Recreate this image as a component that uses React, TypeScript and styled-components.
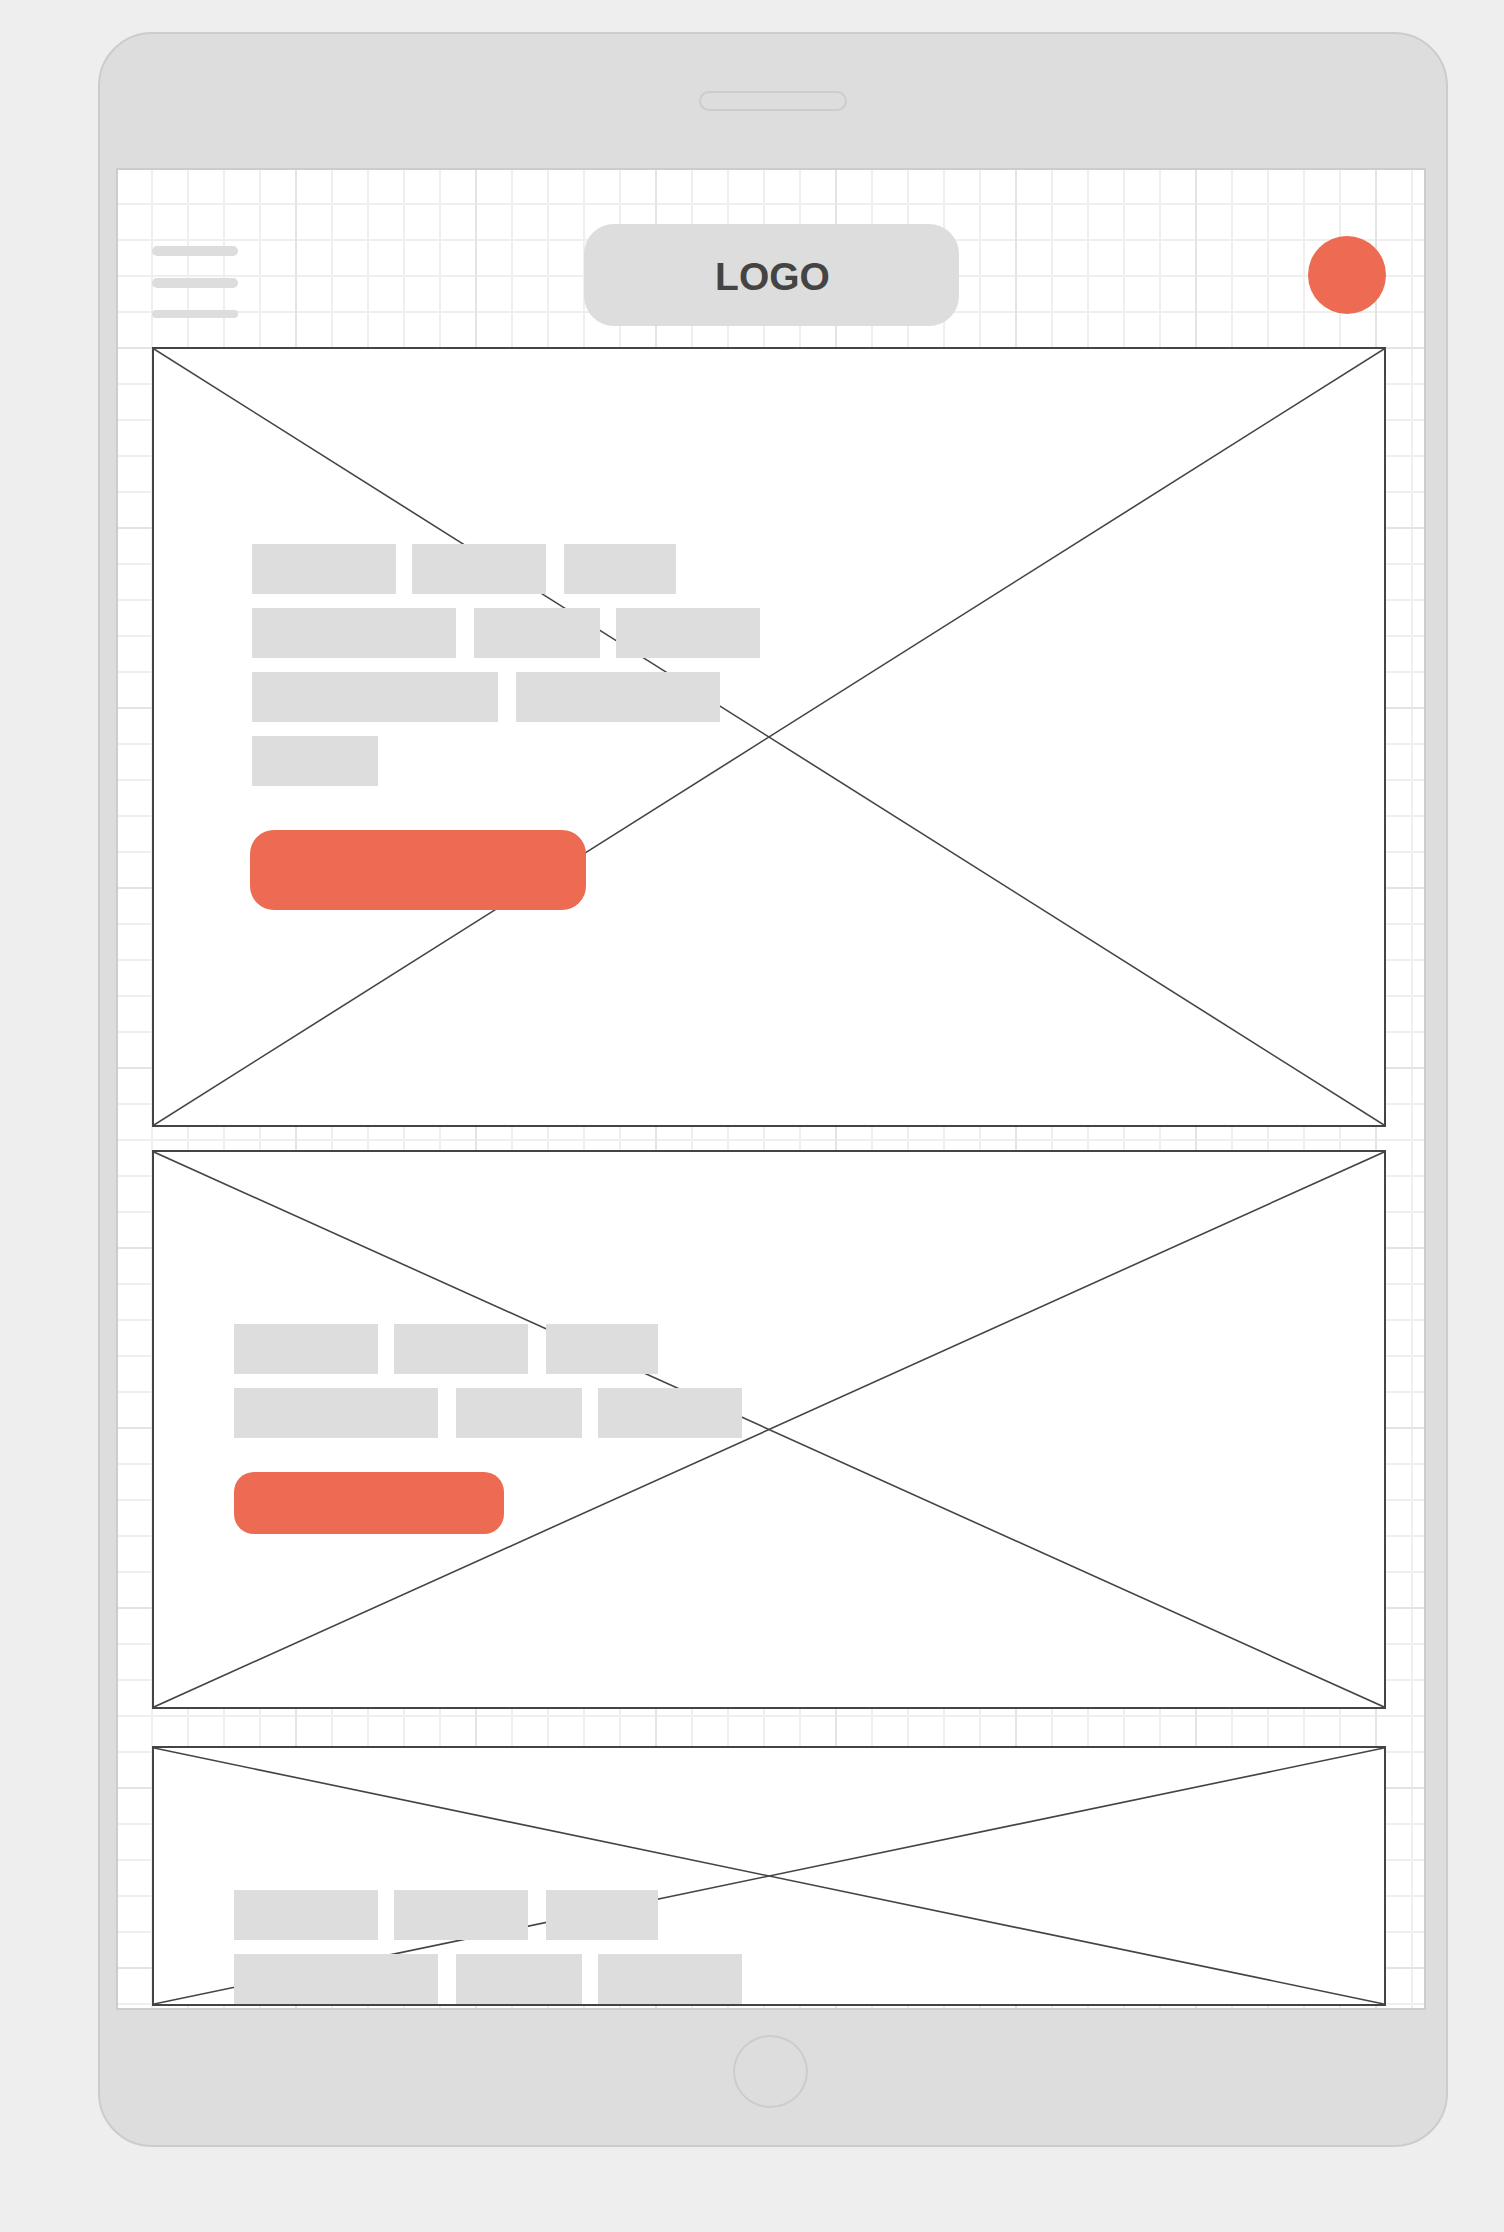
import React from "react";
import styled, { createGlobalStyle } from "styled-components";

const GlobalStyle = createGlobalStyle`
  html, body {
    margin: 0;
    padding: 0;
    background: #eeeeee;
    font-family: "Liberation Sans", Arial, sans-serif;
  }
  * { box-sizing: border-box; }
`;

const Page = styled.div`
  padding: 32px 0 0 98px;
  min-height: 2232px;
`;

const Device = styled.div`
  width: 1350px;
  height: 2115px;
  background: #dddddd;
  border: 2px solid #cccccc;
  border-radius: 54px;
  display: flex;
  flex-direction: column;
  padding: 0 20px 0 16px;
`;

const Bezel = styled.div<{ $h: number; $pt: number }>`
  height: ${(p) => p.$h}px;
  padding-top: ${(p) => p.$pt}px;
  display: flex;
  justify-content: center;
  align-items: flex-start;
  flex: none;
`;

const Speaker = styled.div`
  width: 148px;
  height: 20px;
  border: 2px solid #cccccc;
  border-radius: 10px;
  margin-left: 4px;
`;

const HomeButton = styled.div`
  width: 75px;
  height: 73px;
  border: 2px solid #cccccc;
  border-radius: 50%;
  margin-right: 2px;
`;

const Screen = styled.div`
  width: 1310px;
  height: 1842px;
  flex: none;
  border: 2px solid #cccccc;
  overflow: hidden;
  background-color: #ffffff;
  background-image:
    linear-gradient(to right, #e4e4e4 2px, transparent 2px),
    linear-gradient(to bottom, #e4e4e4 2px, transparent 2px),
    linear-gradient(to right, #efefef 2px, transparent 2px),
    linear-gradient(to bottom, #efefef 2px, transparent 2px);
  background-size: 180px 180px, 180px 180px, 36px 36px, 36px 36px;
  background-position: -3px -3px;
  padding: 0 38px 0 34px;
  display: flex;
  flex-direction: column;
`;

const Header = styled.header`
  display: grid;
  grid-template-columns: 1fr auto 1fr;
  align-items: center;
  padding: 54px 0 21px;
  flex: none;
`;

const Hamburger = styled.div`
  justify-self: start;
  display: flex;
  flex-direction: column;
  gap: 22px;
  margin-top: 14px;
`;

const HamburgerBar = styled.span<{ $h: number }>`
  display: block;
  width: 86px;
  height: ${(p) => p.$h}px;
  background: #dddddd;
  border-radius: 5px;
`;

const Logo = styled.div`
  width: 375px;
  height: 102px;
  margin-left: 5px;
  background: #dddddd;
  border-radius: 30px;
  display: flex;
  align-items: center;
  justify-content: center;
  font-family: "Liberation Sans", Arial, sans-serif;
  font-weight: 700;
  font-size: 39px;
  color: #444444;
  padding: 3px 0 0 2px;
`;

const Avatar = styled.div`
  justify-self: end;
  width: 78px;
  height: 78px;
  border-radius: 50%;
  background: #ec6b52;
`;

const Section = styled.section<{
  $h: number;
  $pt: number;
  $pl: number;
  $mt: number;
}>`
  position: relative;
  flex: none;
  height: ${(p) => p.$h}px;
  margin-top: ${(p) => p.$mt}px;
  border: 2px solid #444444;
  background: #ffffff;
  padding: ${(p) => p.$pt}px 0 0 ${(p) => p.$pl}px;
  overflow: hidden;
`;

const Cross = styled.svg`
  position: absolute;
  inset: 0;
  width: 100%;
  height: 100%;
  z-index: 0;
`;

const Content = styled.div`
  position: relative;
  z-index: 1;
  display: flex;
  flex-direction: column;
  align-items: flex-start;
  gap: 14px;
`;

const TextRow = styled.div`
  display: flex;
`;

const Bar = styled.div<{ $w: number; $ml: number }>`
  flex: none;
  width: ${(p) => p.$w}px;
  height: 50px;
  margin-left: ${(p) => p.$ml}px;
  background: #dddddd;
`;

const Cta = styled.button<{ $w: number; $h: number; $r: number; $mt: number; $ml: number }>`
  width: ${(p) => p.$w}px;
  height: ${(p) => p.$h}px;
  border-radius: ${(p) => p.$r}px;
  margin-top: ${(p) => p.$mt}px;
  margin-left: ${(p) => p.$ml}px;
  background: #ec6b52;
  border: none;
  padding: 0;
  cursor: pointer;
`;

type Row = Array<[number, number]>;

const heroRows: Row[] = [
  [[144, 0], [134, 16], [112, 18]],
  [[204, 0], [126, 18], [144, 16]],
  [[246, 0], [204, 18]],
  [[126, 0]],
];

const shortRows: Row[] = [
  [[144, 0], [134, 16], [112, 18]],
  [[204, 0], [126, 18], [144, 16]],
];

const CrossLines: React.FC = () => (
  <Cross viewBox="0 0 100 100" preserveAspectRatio="none" aria-hidden="true">
    <line x1="0" y1="0" x2="100" y2="100" stroke="#444444" strokeWidth="1.6" vectorEffect="non-scaling-stroke" />
    <line x1="100" y1="0" x2="0" y2="100" stroke="#444444" strokeWidth="1.6" vectorEffect="non-scaling-stroke" />
  </Cross>
);

const TextLines: React.FC<{ rows: Row[] }> = ({ rows }) => (
  <>
    {rows.map((row, i) => (
      <TextRow key={i}>
        {row.map(([w, ml], j) => (
          <Bar key={j} $w={w} $ml={ml} />
        ))}
      </TextRow>
    ))}
  </>
);

export default function App() {
  return (
    <>
      <GlobalStyle />
      <Page>
        <Device>
          <Bezel $h={134} $pt={57}>
            <Speaker />
          </Bezel>
          <Screen>
            <Header>
              <Hamburger>
                <HamburgerBar $h={10} />
                <HamburgerBar $h={10} />
                <HamburgerBar $h={8} />
              </Hamburger>
              <Logo>LOGO</Logo>
              <Avatar />
            </Header>

            <Section $h={780} $pt={195} $pl={98} $mt={0}>
              <CrossLines />
              <Content>
                <TextLines rows={heroRows} />
                <Cta $w={336} $h={80} $r={24} $mt={30} $ml={-2} aria-label="Call to action" />
              </Content>
            </Section>

            <Section $h={559} $pt={172} $pl={80} $mt={23}>
              <CrossLines />
              <Content>
                <TextLines rows={shortRows} />
                <Cta $w={270} $h={62} $r={20} $mt={20} $ml={0} aria-label="Call to action" />
              </Content>
            </Section>

            <Section $h={260} $pt={142} $pl={80} $mt={37}>
              <CrossLines />
              <Content>
                <TextLines rows={shortRows} />
                <Cta $w={270} $h={62} $r={20} $mt={20} $ml={0} aria-label="Call to action" />
              </Content>
            </Section>
          </Screen>
          <Bezel $h={135} $pt={25}>
            <HomeButton />
          </Bezel>
        </Device>
      </Page>
    </>
  );
}
